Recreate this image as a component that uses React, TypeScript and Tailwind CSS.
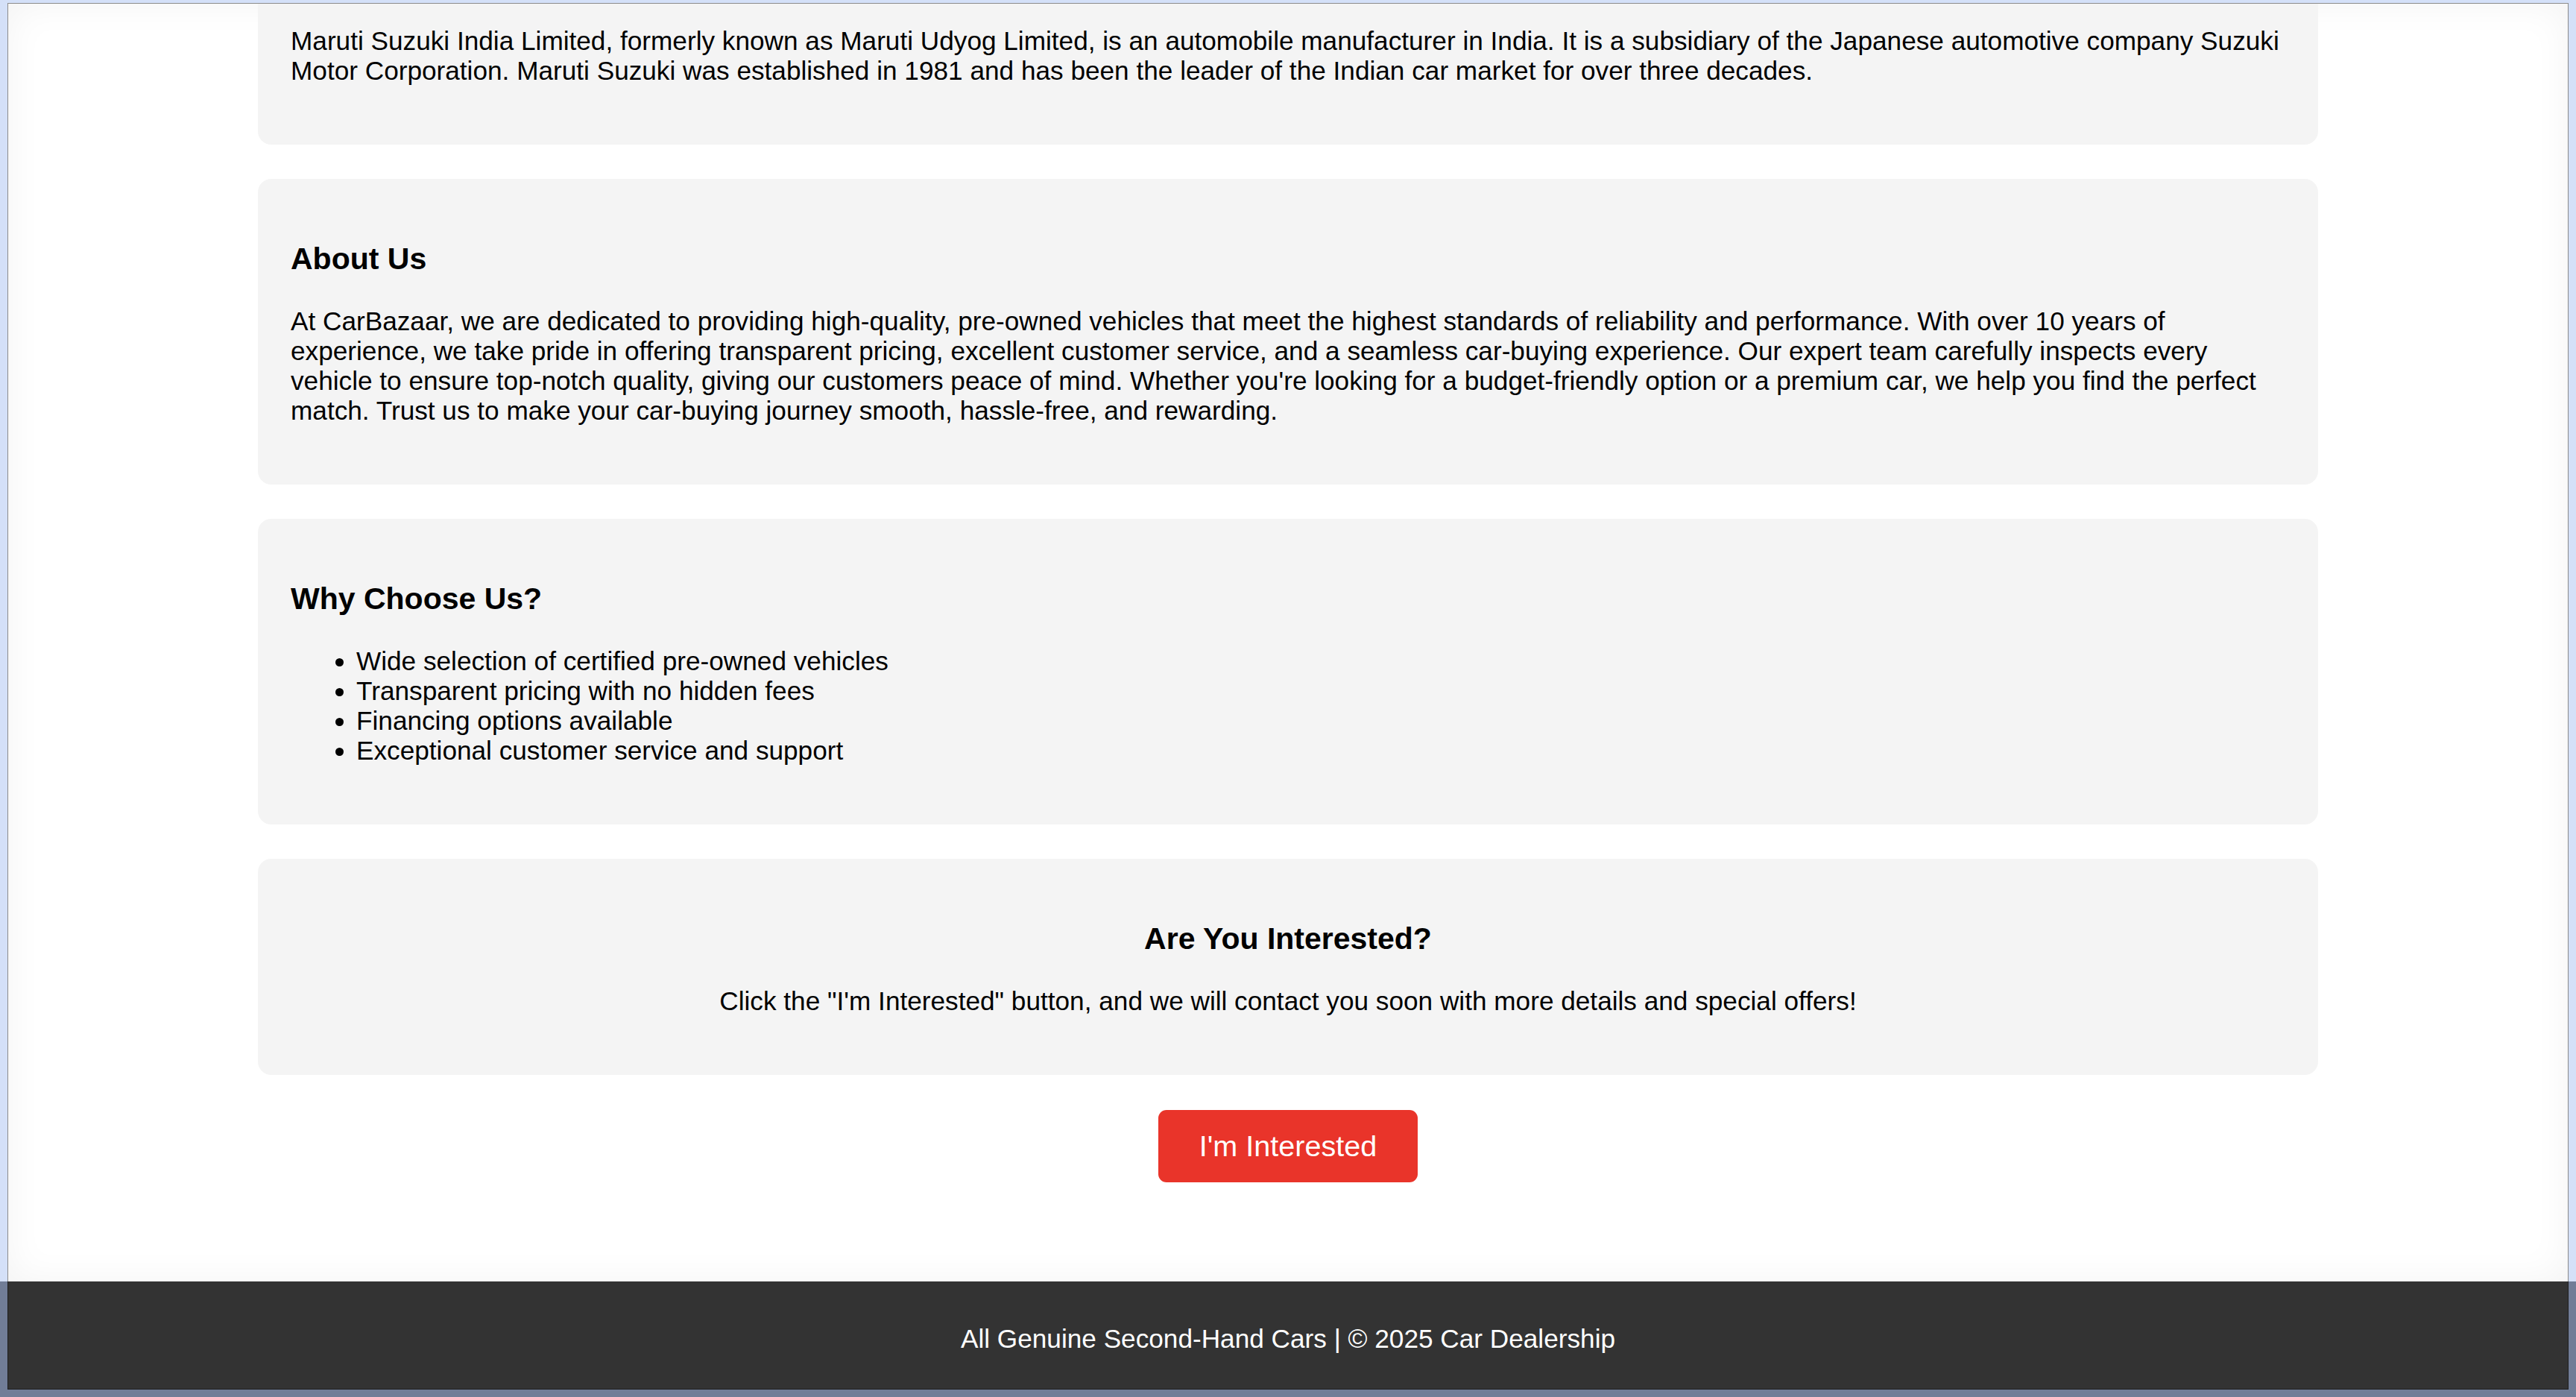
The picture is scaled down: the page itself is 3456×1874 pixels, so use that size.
import { ReactNode } from "react"

const reasons = [
  "Wide selection of certified pre-owned vehicles",
  "Transparent pricing with no hidden fees",
  "Financing options available",
  "Exceptional customer service and support"
]

function Card({
  children,
  className = ""
}: {
  children: ReactNode
  className?: string
}) {
  return (
    <section className={`mt-[46px] rounded-[18px] bg-[#f4f4f4] px-[44px] py-[44px] ${className}`}>
      {children}
    </section>
  )
}

function Heading({ children }: { children: ReactNode }) {
  return <h3 className="my-[41px] text-[41px] font-bold leading-[45px]">{children}</h3>
}

export default function App() {
  return (
    <div className="flex h-screen flex-col overflow-hidden bg-[#d4e0f8] font-['Liberation_Sans',Arial,sans-serif] text-[35.2px] leading-[40px] text-black">
      <div className="flex min-h-0 flex-1 flex-col px-[10px] pt-[4px]">
        <main className="flex-1 overflow-hidden border-x border-t border-[#8c8c8c] bg-white shadow-[inset_0_0_50px_rgba(0,0,0,0.05)]">
          <div className="mx-auto w-[2764px]">
            {/* first card is scrolled partly out of view */}
            <section className="rounded-b-[18px] bg-[#f4f4f4] px-[44px] pt-[30px] pb-[44px]">
              <p className="mb-[35px]">
                Maruti Suzuki India Limited, formerly known as Maruti Udyog Limited, is an automobile
                manufacturer in India. It is a subsidiary of the Japanese automotive company Suzuki Motor
                Corporation. Maruti Suzuki was established in 1981 and has been the leader of the Indian car
                market for over three decades.
              </p>
            </section>

            <Card>
              <Heading>About Us</Heading>
              <p className="mb-[35px]">
                At CarBazaar, we are dedicated to providing high-quality, pre-owned vehicles that meet the
                highest standards of reliability and performance. With over 10 years of experience, we take
                pride in offering transparent pricing, excellent customer service, and a seamless car-buying
                experience. Our expert team carefully inspects every vehicle to ensure top-notch quality,
                giving our customers peace of mind. Whether you're looking for a budget-friendly option or a
                premium car, we help you find the perfect match. Trust us to make your car-buying journey
                smooth, hassle-free, and rewarding.
              </p>
            </Card>

            <Card>
              <Heading>Why Choose Us?</Heading>
              <ul className="mb-[35px] list-disc pl-[88px]">
                {reasons.map((r) => (
                  <li key={r}>{r}</li>
                ))}
              </ul>
            </Card>

            <Card className="text-center">
              <Heading>Are You Interested?</Heading>
              <p className="mb-[35px]">
                Click the "I'm Interested" button, and we will contact you soon with more details and special
                offers!
              </p>
            </Card>

            <div className="mt-[47px] flex justify-center">
              <button className="rounded-[11px] bg-[#e9342a] px-[55px] py-[26px] text-[39.6px] leading-[45px] text-white">
                I'm Interested
              </button>
            </div>
          </div>
        </main>
      </div>

      <div className="bg-[#717d97] px-[10px] pb-[10px]">
        <footer className="h-[145px] border-x border-b border-[#1f1f1f] bg-[#333333] pt-[57px] text-center text-white">
          <p>All Genuine Second-Hand Cars | © 2025 Car Dealership</p>
        </footer>
      </div>
    </div>
  )
}
